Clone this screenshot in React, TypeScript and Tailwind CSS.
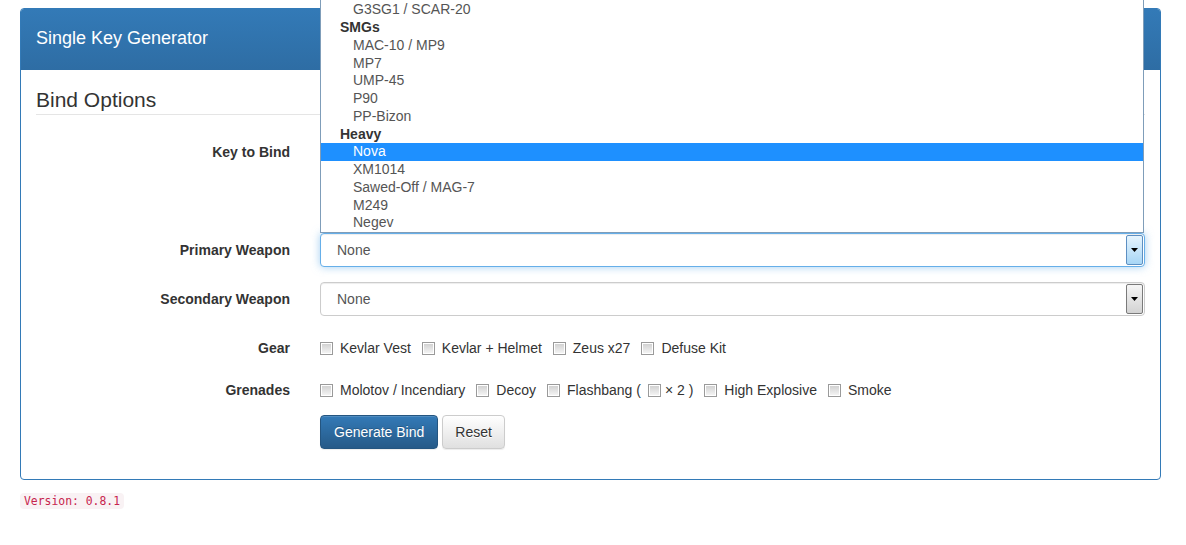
import React from "react";

type Entry = { label: string; group?: boolean; active?: boolean };

const weaponList: Entry[] = [
  { label: "Rifles", group: true },
  { label: "Galil AR / FAMAS" },
  { label: "AK-47 / M4A4 / M4A1-S" },
  { label: "SSG 08" },
  { label: "AUG / SG 553" },
  { label: "AWP" },
  { label: "G3SG1 / SCAR-20" },
  { label: "SMGs", group: true },
  { label: "MAC-10 / MP9" },
  { label: "MP7" },
  { label: "UMP-45" },
  { label: "P90" },
  { label: "PP-Bizon" },
  { label: "Heavy", group: true },
  { label: "Nova", active: true },
  { label: "XM1014" },
  { label: "Sawed-Off / MAG-7" },
  { label: "M249" },
  { label: "Negev" },
];

function Check() {
  return (
    <span className="inline-flex h-[13px] w-[13px] shrink-0 items-center justify-center border border-[#9a9a9a] bg-white">
      <span className="h-[9px] w-[9px] bg-gradient-to-b from-[#d2d2d2] to-[#f3f3f3]" />
    </span>
  );
}

function CheckItem({ children }: { children: React.ReactNode }) {
  return (
    <label className="flex items-center gap-[7px] whitespace-nowrap">
      <Check />
      <span>{children}</span>
    </label>
  );
}

function Arrow({ focused }: { focused?: boolean }) {
  return (
    <span
      className={
        focused
          ? "absolute right-[1px] top-[1px] bottom-[1px] flex w-[17px] items-center justify-center rounded-[2px] border border-[#5d8fc2] bg-gradient-to-b from-[#e6f4fd] to-[#a7d6f6]"
          : "absolute right-[1px] top-[1px] bottom-[1px] flex w-[17px] items-center justify-center rounded-[2px] border border-[#7a7a7a] bg-gradient-to-b from-[#f6f6f6] to-[#d3d3d3]"
      }
    >
      <svg width="7" height="4" viewBox="0 0 7 4">
        <path d="M0 0h7L3.5 4z" fill="#000" />
      </svg>
    </span>
  );
}

function SelectBox({ focused }: { focused?: boolean }) {
  return (
    <div
      className={
        focused
          ? "relative h-[34px] w-full rounded-[4px] border border-[#66afe9] bg-white pl-[16px] leading-[32px] text-[#555] shadow-[inset_0_1px_1px_rgba(0,0,0,0.075),0_0_8px_rgba(102,175,233,0.6)]"
          : "relative h-[34px] w-full rounded-[4px] border border-[#ccc] bg-white pl-[16px] leading-[32px] text-[#555] shadow-[inset_0_1px_1px_rgba(0,0,0,0.075)]"
      }
    >
      None
      <Arrow focused={focused} />
    </div>
  );
}

function Row({
  label,
  children,
  className = "",
}: {
  label: string;
  children: React.ReactNode;
  className?: string;
}) {
  return (
    <div className={"flex gap-[30px] " + className}>
      <div className="w-[254px] shrink-0 pt-[7px] text-right font-bold leading-[20px] text-[#333]">
        {label}
      </div>
      <div className="min-w-0 flex-1">{children}</div>
    </div>
  );
}

export default function App() {
  return (
    <div className="min-h-[545px] bg-white pt-[8px] text-[14px] leading-[20px] text-[#333] [font-family:'Liberation_Sans',Arial,sans-serif]">
      <div className="ml-[20px] w-[1141px] rounded-[4px] border border-[#337ab7] bg-white">
        <div className="h-[61px] rounded-t-[3px] bg-gradient-to-b from-[#337ab7] to-[#2e6da4] px-[15px] pt-[19px]">
          <h3 className="text-[18px] leading-[20px] text-white">Single Key Generator</h3>
        </div>

        <div className="px-[15px] pt-[15px] pb-[30px]">
          <div className="mb-[20px] h-[30px] border-b border-[#e5e5e5] text-[21px] leading-[30px] text-[#333]">
            Bind Options
          </div>

          <div className="flex flex-col gap-[15px]">
            <Row label="Key to Bind" className="h-[83px]">
              <div />
            </Row>

            <Row label="Primary Weapon">
              <div className="relative">
                <div className="absolute bottom-full left-0 right-[1px] z-10 border border-[#7f9db9] bg-white">
                  {weaponList.map((w) => (
                    <div
                      key={w.label}
                      className={
                        w.group
                          ? "h-[17.75px] whitespace-nowrap pl-[19px] font-bold leading-[17.75px] text-[#333]"
                          : w.active
                          ? "h-[17.75px] whitespace-nowrap bg-[#1e90ff] pl-[32px] leading-[17.75px] text-white"
                          : "h-[17.75px] whitespace-nowrap pl-[32px] leading-[17.75px] text-[#555]"
                      }
                    >
                      {w.label}
                    </div>
                  ))}
                </div>
                <SelectBox focused />
              </div>
            </Row>

            <Row label="Secondary Weapon">
              <SelectBox />
            </Row>

            <Row label="Gear" className="h-[27px]">
              <div className="flex gap-[11px] pt-[7px]">
                <CheckItem>Kevlar Vest</CheckItem>
                <CheckItem>Kevlar + Helmet</CheckItem>
                <CheckItem>Zeus x27</CheckItem>
                <CheckItem>Defuse Kit</CheckItem>
              </div>
            </Row>

            <Row label="Grenades" className="h-[27px]">
              <div className="flex gap-[11px] pt-[7px]">
                <CheckItem>Molotov / Incendiary</CheckItem>
                <CheckItem>Decoy</CheckItem>
                <label className="flex items-center gap-[7px] whitespace-nowrap">
                  <Check />
                  <span>Flashbang (</span>
                  <span className="flex items-center gap-[4px]">
                    <Check />
                    <span>× 2 )</span>
                  </span>
                </label>
                <CheckItem>High Explosive</CheckItem>
                <CheckItem>Smoke</CheckItem>
              </div>
            </Row>

            <div className="flex gap-[4px] pl-[284px]">
              <button className="h-[34px] rounded-[4px] border border-[#245580] bg-gradient-to-b from-[#337ab7] to-[#265a88] px-[13px] text-[14px] text-white shadow-[inset_0_1px_0_rgba(255,255,255,0.15),0_1px_1px_rgba(0,0,0,0.075)] [text-shadow:0_-1px_0_rgba(0,0,0,0.2)]">
                Generate Bind
              </button>
              <button className="h-[34px] rounded-[4px] border border-[#ccc] bg-gradient-to-b from-white to-[#e0e0e0] px-[12px] text-[14px] text-[#333] shadow-[inset_0_1px_0_rgba(255,255,255,0.15),0_1px_1px_rgba(0,0,0,0.075)] [text-shadow:0_1px_0_#fff]">
                Reset
              </button>
            </div>
          </div>
        </div>
      </div>

      <div className="ml-[20px] mt-[13px] flex">
        <code className="inline-block h-[16px] rounded-[4px] bg-[#f9f2f4] px-[4px] text-[11.4px] leading-[16px] text-[#c7254e] [font-family:'DejaVu_Sans_Mono',monospace]">
          Version: 0.8.1
        </code>
      </div>
    </div>
  );
}
